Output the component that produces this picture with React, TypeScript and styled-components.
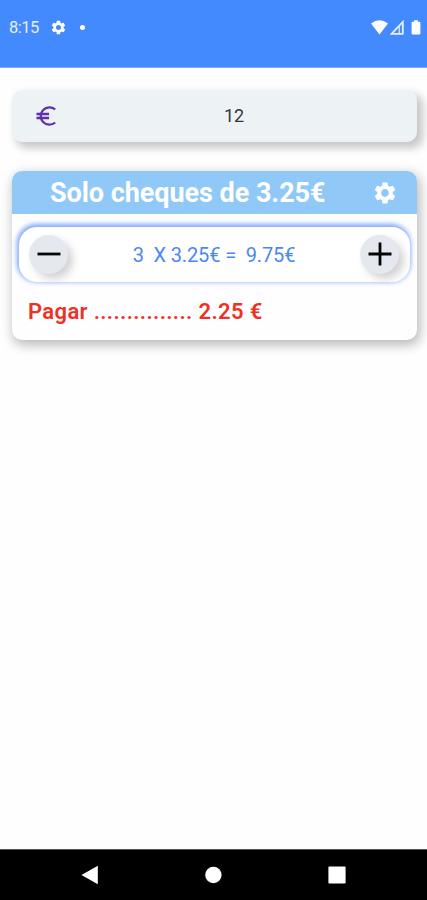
import React from 'react';
import styled, { createGlobalStyle } from 'styled-components';
import { MdSettings } from 'react-icons/md';

const GlobalStyle = createGlobalStyle`
  * { box-sizing: border-box; }
  body {
    margin: 0;
    background: #fefefe;
    font-family: Roboto, "Liberation Sans", sans-serif;
  }
  svg { display: block; flex: none; }
`;

const Screen = styled.div`
  display: flex;
  flex-direction: column;
  width: 427px;
  height: 900px;
  overflow: hidden;
`;

const StatusBar = styled.header`
  display: flex;
  align-items: flex-start;
  justify-content: space-between;
  height: 68px;
  padding: 18px 6px 0 9px;
  background: #448aff;
  border-bottom: 1px solid #7aabfb;
  color: #fff;
`;

const StatusGroup = styled.div<{ $gap: number }>`
  display: flex;
  align-items: center;
  gap: ${({ $gap }) => $gap}px;
  height: 18px;
`;

const Clock = styled.span`
  width: 30px;
  margin-right: 1px;
  padding-top: 1px;
  font-size: 16.5px;
  line-height: 19px;
  letter-spacing: -0.5px;
  color: #e6efff;
  white-space: nowrap;
`;

const Dot = styled.span`
  width: 5px;
  height: 5px;
  margin-left: 3px;
  border-radius: 50%;
  background: #fff;
`;

const Content = styled.main`
  display: flex;
  flex: 1;
  flex-direction: column;
  gap: 29px;
  padding: 22px 10px 0 12px;
`;

const AmountField = styled.div`
  display: grid;
  grid-template-columns: 68px 1fr 29px;
  align-items: center;
  height: 52px;
  border-radius: 10px;
  background: #edf2f5;
  box-shadow: 5px 5px 8px 1px #c6c6c9;
  color: #5e2fb5;
`;

const EuroSlot = styled.div`
  padding-left: 23px;
`;

const Amount = styled.span`
  font-size: 18px;
  line-height: 22px;
  color: #333638;
  text-align: center;
`;

const Card = styled.section`
  height: 169px;
  border-radius: 10px;
  background: #fefefe;
  box-shadow: 2px 4px 12px 1px #b8b8b8;
`;

const CardHeader = styled.div`
  display: flex;
  align-items: center;
  justify-content: space-between;
  height: 43px;
  padding: 0 19px 0 38px;
  border-radius: 10px 10px 0 0;
  background: #90c8f8;
  color: #fff;
`;

const Title = styled.h1`
  margin: 0;
  padding-top: 2px;
  font-size: 27px;
  font-weight: 700;
  line-height: 41px;
  letter-spacing: -0.05px;
  white-space: nowrap;
`;

const Counter = styled.div`
  display: flex;
  align-items: center;
  justify-content: space-between;
  height: 55px;
  margin: 13px 7px 0;
  padding: 0 11px 1px 10px;
  border-radius: 18px;
  background: #fff;
  box-shadow:
    -1px -2px 5px 1px rgba(68, 126, 255, 0.62),
    0 0 4px 1px rgba(68, 126, 255, 0.2);
`;

const RoundButton = styled.button`
  display: flex;
  align-items: center;
  justify-content: center;
  width: 39px;
  height: 39px;
  padding: 0;
  border: 0;
  border-radius: 50%;
  background: #e5e8ef;
  box-shadow: 5px 5px 8px #d2d2d2;
`;

const Formula = styled.span`
  padding-top: 1px;
  font-size: 20px;
  line-height: 24px;
  letter-spacing: -0.12px;
  color: #4a88f5;
  white-space: pre;
`;

const Due = styled.p`
  margin: 17px 0 0 16px;
  font-size: 22px;
  font-weight: 600;
  line-height: 26px;
  letter-spacing: 0.35px;
  color: #ee3124;
  white-space: nowrap;
`;

const NavBar = styled.nav`
  display: flex;
  align-items: center;
  justify-content: space-between;
  height: 51px;
  padding: 0 81px 0 80px;
  background: #000;
  border-top: 1px solid #555;

  svg { margin-top: -1px; }
`;

const Stroke = ({ plus }: { plus?: boolean }) => (
  <svg width="24" height="24" viewBox="0 0 24 24" stroke="#050505" strokeWidth="2.8">
    <path d={plus ? 'M.5 12h23M12 .5v23' : 'M.5 12h23'} />
  </svg>
);

const Euro = () => (
  <svg width="22" height="22" viewBox="0 0 22 22" fill="none" stroke="currentColor" strokeWidth="2.3">
    <path d="M20.2 4.5A8.7 8.7 0 1 0 20.2 17.5M1.5 9h12.6M1.5 13h12.6" />
  </svg>
);

export default function App() {
  return (
    <Screen>
      <GlobalStyle />
      <StatusBar>
        <StatusGroup $gap={10}>
          <Clock>8:15</Clock>
          <MdSettings size={17} />
          <Dot />
        </StatusGroup>
        <StatusGroup $gap={2}>
          <svg width="17" height="15" viewBox="0 0 17 15" fill="#fff">
            <path d="M0 3.5Q8.5-3 17 3.5L8.5 14.5Z" />
          </svg>
          <svg width="14" height="15" viewBox="0 0 14 15" fill="none" stroke="#e5efff" strokeWidth="1.8">
            <path d="M12.8 2v11.8H1.6Z" />
            <path d="M9.3 6.5v7" strokeWidth="1.2" />
          </svg>
          <svg width="15" height="15" viewBox="-1 0 15 15" fill="#fff">
            <path d="M7.2.3h3.6v1.5h1.7q.9 0 .9.9v10.8q0 .9-.9.9h-7q-.9 0-.9-.9V2.7q0-.9.9-.9h1.7Z" />
          </svg>
        </StatusGroup>
      </StatusBar>
      <Content>
        <AmountField>
          <EuroSlot>
            <Euro />
          </EuroSlot>
          <Amount>12</Amount>
        </AmountField>
        <Card>
          <CardHeader>
            <Title>Solo cheques de 3.25€</Title>
            <MdSettings size={26} />
          </CardHeader>
          <Counter>
            <RoundButton aria-label="Menos">
              <Stroke />
            </RoundButton>
            <Formula>{'3  X 3.25€ =  9.75€'}</Formula>
            <RoundButton aria-label="Más">
              <Stroke plus />
            </RoundButton>
          </Counter>
          <Due>Pagar ............... 2.25 €</Due>
        </Card>
      </Content>
      <NavBar>
        <svg width="18" height="20" viewBox="0 0 18 20" fill="#fff">
          <path d="M17.8.8v18.4L1.5 10Z" />
        </svg>
        <svg width="18" height="18" viewBox="0 0 18 18" fill="#fff">
          <circle cx="9.4" cy="9" r="8.2" />
        </svg>
        <svg width="18" height="18" viewBox="0 0 18 18" fill="#fff">
          <rect x=".4" y=".4" width="17.2" height="17.2" rx="1" />
        </svg>
      </NavBar>
    </Screen>
  );
}
